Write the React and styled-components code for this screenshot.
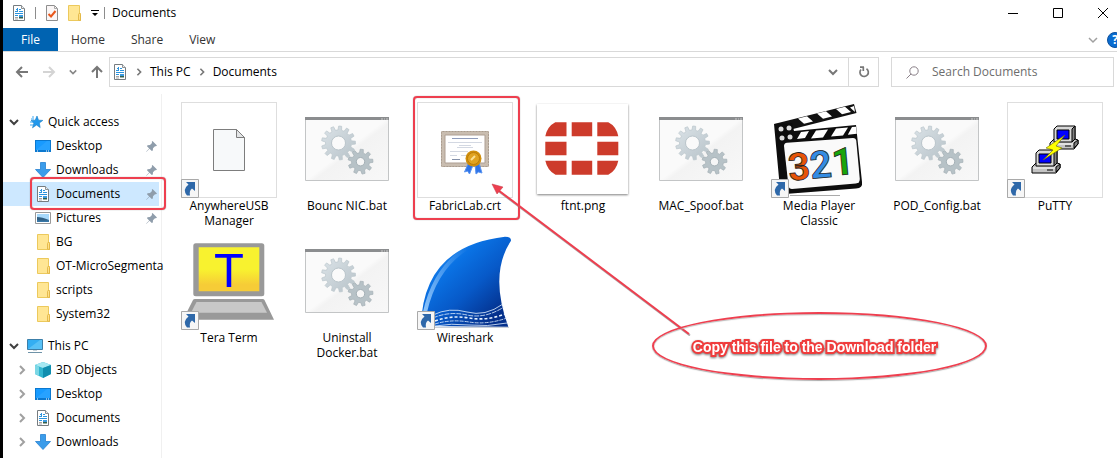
import React from "react";
import styled, { createGlobalStyle } from "styled-components";

const GlobalStyle = createGlobalStyle`
  *, *::before, *::after { box-sizing: border-box; }
  body {
    margin: 0;
    background: #fff;
    color: #000;
    font: 12px/16px "Open Sans", "Noto Sans", sans-serif;
  }
  button, input { font: inherit; color: inherit; }
  button { border: 0; padding: 0; background: none; cursor: pointer; }
  svg { display: block; flex: none; }
`;

const RED = "#ee3f4f";

const Window = styled.div`
  display: flex;
  flex-direction: column;
  min-height: 100vh;
  border-left: 3px solid #000;
  overflow: hidden;
`;

const TitleBar = styled.header`
  display: flex;
  align-items: center;
  height: 28px;
  padding-left: 10px;
  padding-bottom: 3px;
`;

const QuickTools = styled.div`
  display: flex;
  align-items: center;
  gap: 10px;
`;

const QuickMenu = styled.div`
  display: flex;
  align-items: center;
  gap: 5px;
`;

const Separator = styled.span`
  width: 1px;
  height: 12px;
  background: #8c8c8c;
`;

const Title = styled.h1`
  margin: 0 0 0 7px;
  flex: 1;
  font-size: 12px;
  font-weight: 400;
`;

const WindowButtons = styled.div`
  display: flex;
  gap: 17px;
`;

const WindowButton = styled.button`
  display: grid;
  place-items: center;
  width: 28px;
  height: 24px;
`;

const Ribbon = styled.nav`
  display: flex;
  align-items: stretch;
  height: 24px;
  border-bottom: 1px solid #d9d9d9;
`;

const Tab = styled.button`
  padding: 0 ${(p) => (p.$primary ? 18 : 13)}px;
  background: ${(p) => (p.$primary ? "#0063b1" : "transparent")};
  color: ${(p) => (p.$primary ? "#fff" : "#333")};
`;

const RibbonEnd = styled.div`
  display: flex;
  align-items: center;
  gap: 9px;
  margin-left: auto;
  margin-right: -6px;
`;

const AddressRow = styled.div`
  display: flex;
  align-items: center;
  gap: 12px;
  padding: 5px 3px 7px 12px;
`;

const NavButtons = styled.div`
  display: flex;
  align-items: center;
  gap: 13px;
  margin-right: -7px;
`;

const AddressBox = styled.div`
  display: flex;
  align-items: center;
  flex: 1;
  height: 30px;
  border: 1px solid #d9d9d9;
  padding-left: 2px;
`;

const Crumbs = styled.div`
  display: flex;
  align-items: center;
  flex: 1;
  gap: 7px;
`;

const AddressButton = styled.button`
  display: grid;
  place-items: center;
  align-self: stretch;
  width: 30px;
  border-left: ${(p) => (p.$divided ? "1px solid #d9d9d9" : "0")};
`;

const SearchBox = styled.label`
  display: flex;
  align-items: center;
  flex: 0 0 223px;
  gap: 13px;
  height: 30px;
  padding-left: 14px;
  border: 1px solid #d9d9d9;
`;

const SearchInput = styled.input`
  flex: 1;
  min-width: 0;
  border: 0;
  padding: 0;
  outline: 0;
  background: none;
  &::placeholder { color: #6d6d6d; opacity: 1; }
`;

const Body = styled.div`
  display: flex;
  flex: 1;
`;

const Sidebar = styled.nav`
  flex: 0 0 159px;
  min-width: 0;
  padding: 16px 2px 0 0;
  border-right: 1px solid #f0f0f0;
`;

const TreeGroup = styled.div`
  margin-bottom: 8px;
`;

const TreeRow = styled.button`
  position: relative;
  display: flex;
  align-items: center;
  gap: 5px;
  width: 100%;
  height: 24px;
  padding-left: ${(p) => (p.$nested ? 11 : 3)}px;
  text-align: left;
  background: ${(p) => (p.$selected ? "#cde8ff" : "transparent")};
`;

const Toggle = styled.span`
  display: grid;
  place-items: center;
  flex: 0 0 16px;
`;

const TreeLabel = styled.span`
  flex: 1;
  min-width: 0;
  white-space: nowrap;
`;

const PinSlot = styled.span`
  padding-right: 2px;
`;

const Marker = styled.span`
  position: absolute;
  inset: ${(p) => p.$inset};
  border: 2px solid ${RED};
  border-radius: 4px;
  box-shadow: 0 0 1px #777, inset 0 0 1px #999;
  pointer-events: none;
`;

const Files = styled.main`
  position: relative;
  display: grid;
  grid-template-columns: repeat(auto-fill, 118px);
  grid-auto-rows: 132px;
  align-content: start;
  flex: 1;
  padding: 8px 0 0 8px;
`;

const File = styled.button`
  position: relative;
  display: flex;
  flex-direction: column;
  align-items: center;
  line-height: 15px;
`;

const Thumb = styled.span`
  position: relative;
  width: 96px;
  height: 96px;
  border: 1px solid ${(p) => (p.$framed ? "#dedede" : "transparent")};
  > svg { margin: -1px; }
`;

const FileName = styled.span`
  width: 96px;
`;

const Arrow = styled.svg`
  position: absolute;
  left: 328px;
  top: 88px;
  pointer-events: none;
`;

const Callout = styled.div`
  position: absolute;
  left: 490px;
  top: 218px;
  display: flex;
  align-items: center;
  justify-content: center;
  width: 335px;
  height: 68px;
  padding: 2px 10px 0 0;
  border: 2px solid ${RED};
  border-radius: 50%;
  box-shadow: 0 1px 1px #aaa, inset 0 1px 1px #bbb;
  color: #fff;
  font: bold 14px/16px "Liberation Sans", Arial, sans-serif;
  white-space: nowrap;
`;

const CalloutText = styled.span`
  -webkit-text-stroke: 4px #f03c3c;
  paint-order: stroke fill;
  filter: drop-shadow(0 1px 1px #777);
`;

function Chevron({ dir = "down", color = "#444", size = 10, weight = 2 }) {
  const d = { down: "M1 3l4 4 4-4", right: "M3 1l4 4-4 4" }[dir];
  return (
    <svg width={size} height={size} viewBox="0 0 10 10" fill="none" stroke={color} strokeWidth={weight}>
      <path d={d} />
    </svg>
  );
}

function ArrowIcon({ dir, color }) {
  const turn = { left: 0, up: 90, right: 180 }[dir];
  return (
    <svg width="14" height="14" viewBox="0 0 14 14" fill="none" stroke={color} strokeWidth="2">
      <path d="M7 2L2 7l5 5M2 7h11" transform={`rotate(${turn} 7 7)`} />
    </svg>
  );
}

function DocIcon({ w = 16 }) {
  return (
    <svg width={w} height="16" viewBox={w === 16 ? "0 0 16 16" : "2 0 12 16"}>
      <path d="M2.5.5h8l3 3v12h-11z" fill="#fff" stroke="#767c80" />
      <path d="M10.500 .5v3h3" fill="#eee" stroke="#8b9195" />
      <path d="M4 6.500h3M5 4.500h1M6.500 3v4M8 4.500h2M8 6.500h4M4 8.500h8M4 10.500h3" stroke="#2b94de" fill="none" />
      <path d="M4 12.500h3M4 14h3" stroke="#a5a5a5" />
      <path d="M8 10h4v2H8z" fill="#3c9ae0" />
      <path d="M8 12h4v1.500H8z" fill="#34604c" />
    </svg>
  );
}

function FolderIcon({ w = 16 }) {
  return (
    <svg width={w} height="16" viewBox={w === 16 ? "0 0 16 16" : "2 0 13 16"}>
      <path d="M2.500 .5h11v8h1v7h-12z" fill="#ffe694" stroke="#ecc95c" />
      <path d="M12.500 15v-5.500l1-1.500 1 1.500v6z" fill="#ffe08a" stroke="#deb13c" strokeWidth=".8" />
    </svg>
  );
}

function CheckDocIcon() {
  return (
    <svg width="12" height="16" viewBox="0 0 12 16" fill="none">
      <path d="M.5.5h8l3 3v12H.5z" fill="#faf6f6" stroke="#8e8e8e" />
      <path d="M8.500 .5v3h3" stroke="#aaa" />
      <path d="M2.500 9l2.500 2.500L9.500 6" stroke="#e8571c" strokeWidth="2" />
    </svg>
  );
}

function DesktopIcon() {
  return (
    <svg width="16" height="16" viewBox="0 0 16 16">
      <path d="M0 2h16v12H0z" fill="#0b78cf" />
      <path d="M1 3h14v9H1z" fill="#189bff" />
      <path d="M1 12L12 3h3v9z" fill="#35a9ff" opacity=".5" />
      <path d="M2 13h1M11 13h1M13 13h1" stroke="#fff" />
    </svg>
  );
}

function DownloadIcon() {
  return (
    <svg width="16" height="16" viewBox="0 0 16 16">
      <path d="M5.500 .5h5v7h5L8 15.500.5 7.500h5z" fill="#3b9cea" stroke="#2682d2" strokeWidth=".8" />
    </svg>
  );
}

function PictureIcon() {
  return (
    <svg width="16" height="16" viewBox="0 0 16 16">
      <path d="M.5 2.500h15v11H.5z" fill="#fff" stroke="#999" />
      <path d="M2 4h12v8H2z" fill="#a7d8fa" />
      <path d="M2 7q5 0 12 3v2H2z" fill="#315f83" />
      <path d="M2 10q6 1 12 0v2H2z" fill="#3978a7" />
    </svg>
  );
}

function StarIcon() {
  return (
    <svg width="16" height="16" viewBox="0 0 16 16">
      <path d="M10 2l1.500 4.200 4.300.2-3.500 2.600.9 4.600L9.500 11 5.500 13.800l1.400-4.600L4 6.400l4.200-.2z" fill="#2198ec" stroke="#137ac4" strokeWidth=".6" />
      <path d="M4 5h3M3 8h3M3 11h3M5 3h2" stroke="#3aa7f2" />
    </svg>
  );
}

function PcIcon() {
  return (
    <svg width="16" height="16" viewBox="0 0 16 16">
      <path d="M.5 1.500h15v10H.5z" fill="#34aef2" stroke="#3c7fa9" />
      <path d="M1 11L13 2h2v9z" fill="#72cdf8" opacity=".6" />
      <path d="M1 14.500h14" stroke="#6f93a8" />
      <path d="M6 12h4v1H6z" fill="#c8d4dc" />
    </svg>
  );
}

function CubeIcon() {
  return (
    <svg width="16" height="16" viewBox="0 0 16 16">
      <path d="M0 3l8-3 8 3v9l-8 4-8-4z" fill="#31b5cf" />
      <path d="M0 3l8-3 8 3-8 3z" fill="#a6e8f2" />
      <path d="M8 6l8-3v9l-8 4z" fill="#118eaf" />
      <path d="M0 3l4 1.500v9.500L0 12z" fill="#7bd7e5" />
    </svg>
  );
}

function PinIcon() {
  return (
    <svg width="11" height="11" viewBox="0 0 11 11">
      <path d="M6.500 0L11 4.500l-1 .8-1-.1L7 7.200 6.800 9.500l-1 .5-2.300-2.300L.5 10.800l-.3-.3 3-3L1 5.200l.5-1L4 4l2-2-.2-1.200z" fill="#8f9dab" />
    </svg>
  );
}

function ShortcutBadge() {
  return (
    <g>
      <path d="M.5 77.500h17v18H.5z" fill="#f6f6f6" stroke="#a9a9a9" />
      <path d="M5 80h9v9l-3-2.500q-3 2-2 7H6q-5-6 1.500-11z" fill="#2e68a9" />
    </g>
  );
}

const gearPath = (cx, cy, teeth, outer, root) => {
  const step = (Math.PI * 2) / teeth;
  const at = (r, a) => `${(cx + r * Math.cos(a)).toFixed(2)} ${(cy + r * Math.sin(a)).toFixed(2)}`;
  return Array.from({ length: teeth }, (_, i) => {
    const a = i * step - Math.PI / 2 + 0.1;
    return `${i ? "L" : "M"}${at(root, a - step * 0.3)}L${at(outer, a - step * 0.18)}L${at(outer, a + step * 0.18)}L${at(root, a + step * 0.3)}`;
  }).join("") + "Z";
};

function BatchArt() {
  return (
    <>
      <defs>
        <linearGradient id="pane" x1="0" y1="0" x2="1" y2="1">
          <stop offset=".5" stopColor="#fafafa" />
          <stop offset=".55" stopColor="#f3f3f3" />
          <stop offset="1" stopColor="#f8f8f8" />
        </linearGradient>
        <linearGradient id="gear" x1="0" y1="0" x2="1" y2="1">
          <stop offset="0" stopColor="#dbe3e8" />
          <stop offset="1" stopColor="#b8c3c9" />
        </linearGradient>
      </defs>
      <path d="M6.500 15.500h83v63h-83z" fill="url(#pane)" stroke="#c3c5c6" />
      <path d="M6 15h84v3H6z" fill="#8b8d8f" />
      <path d="M82 17h2M85 17h1M87 17h2" stroke="#c9c9c9" />
      <path d={gearPath(39.500, 41, 13, 17, 13)} fill="url(#gear)" stroke="#bac5cb" strokeWidth=".7" />
      <circle cx="39.500" cy="41" r="7" fill="#fafafa" stroke="#bac5cb" />
      <path d={gearPath(61.500, 59.700, 9, 12.500, 9)} fill="#b7c2c7" stroke="#a3afb5" strokeWidth=".7" />
      <circle cx="61.500" cy="59.700" r="4.200" fill="#f6f6f6" stroke="#a3afb5" />
    </>
  );
}

function BlankDocArt() {
  return (
    <>
      <path d="M32.500 27.500h23l8 8v33h-31z" fill="#f7f9fa" stroke="#7d7d7d" />
      <path d="M55.500 27.500v8h8z" fill="#e3e5e6" stroke="#7d7d7d" />
      <ShortcutBadge />
    </>
  );
}

function CertificateArt() {
  return (
    <>
      <rect x="24" y="29" width="48" height="36" rx="1" fill="#c9bdb0" />
      <rect x="24.500" y="29.500" width="47" height="35" rx="1" fill="none" stroke="#a99c8f" strokeDasharray="2 1" />
      <path d="M28 33h40v28H28z" fill="#fff" stroke="#ae9f93" />
      <path d="M35 36.500h26" stroke="#8f9cbb" />
      <path d="M31 40.500h34M42 43.500h12M40 45.500h16M33 49.500h18M33 53.500h7M44 53.500h6" stroke="#d3d8e2" />
      <path d="M35 57.500h8" stroke="#8390a9" />
      <path d="M51 62l-3.500 8 3-1 2 3 4-10zM58 62l1 10 2.500-2 3.500 1-3-10z" fill="#2f74e8" stroke="#5a94f0" />
      <circle cx="56.500" cy="56.500" r="8" fill="#d08f0d" />
      <circle cx="56.500" cy="56.500" r="6" fill="#e0a321" stroke="#bc7c08" />
      <path d="M54 58l4-4" stroke="#fbe093" strokeWidth="2" fill="none" />
    </>
  );
}

function FtntArt() {
  return (
    <>
      <defs>
        <filter id="paper" x="-10%" y="-10%" width="120%" height="120%">
          <feDropShadow dx="0" dy="1" stdDeviation="1" floodOpacity=".5" />
        </filter>
      </defs>
      <path d="M2 2h91v90H2z" fill="#fff" filter="url(#paper)" />
      <g fill="#cd3b2b">
        <path d="M31.500 20.300v14H10.300q2-10 10-14zM36.700 20.300h20.500v14H36.700zM62.300 20.300h11q8 4 10 14h-21z" />
        <path d="M10.300 39.700h21.200v13.500H10.300zM62.300 39.700h21v13.500h-21z" />
        <path d="M10.300 58.700h21.200v14h-11q-8-4-10.200-14zM36.700 58.700h20.500v14H36.700zM62.300 58.700h21q-2 10-10 14h-11z" />
      </g>
    </>
  );
}

function ClapperArt() {
  return (
    <>
      <path d="M3 22L83 2l2.500 9L22 27z" fill="#111" />
      <path d="M3 22l18-1 2 8 62-6 6 57q1 6-6 6.500L14 92q-4 0-5-5z" fill="#0d0d0d" />
      <path d="M27 16.500l9-2.200 6 5.200-9 2.200zM46 11.500l9-2.200 6 5.200-9 2.200zM65 7l9-2.200 6 5.200-9 2.200zM79 5.500l4-1.500 1 6z" fill="#fff" />
      <path d="M30 30l8-1-4 7-8 1zM45 28.500l12-1-5 8-12 1zM65 26.500l12-1-5 8-12 1zM81 25l4-.3.8 7-9 1z" fill="#fff" />
      <path d="M13 44q0-3 3-3.300L82 36q3 0 3.300 3l3.500 38q0 4-4 4.500L21 87q-3 0-3.500-3z" fill="#fafafa" />
      <g fill="#ddd">
        <circle cx="10" cy="27" r="2.500" />
        <circle cx="18" cy="26" r="2.500" />
        <circle cx="11" cy="36" r="2.500" />
        <circle cx="19" cy="35" r="2.500" />
      </g>
      <g fontFamily="Roboto, sans-serif" fontWeight="700" fontSize="38" stroke="#222" strokeWidth=".8" transform="rotate(-5 48 64)">
        <text x="17" y="76" fill="#e75408">3</text>
        <text x="39" y="76" fill="#348ce3">2</text>
        <text x="61" y="75" fill="#18a60b">1</text>
      </g>
      <path d="M19 93.500h50" stroke="#aaa" />
      <ShortcutBadge />
    </>
  );
}

function Computer({ x, y }) {
  return (
    <g transform={`translate(${x} ${y})`} stroke="#000" strokeLinejoin="round">
      <path d="M1 18l4-4h21l3 1v4l-4 5H1z" fill="#c4c4c4" />
      <path d="M25 23v-5l4-3v4z" fill="#808080" />
      <path d="M5 4l3-3h18v13l-3 3H5z" fill="#d8d8d8" />
      <path d="M23 4l3-3v13l-3 3z" fill="#808080" />
      <path d="M8 5h12v9H8z" fill="#00f" />
      <path d="M2 19h22" stroke="#fff" />
      <path d="M16 21h6" />
    </g>
  );
}

function PuttyArt() {
  return (
    <>
      <Computer x="42" y="23" />
      <Computer x="24" y="47" />
      <path d="M58 33L39 46l7 2-10 10 19-12-6-2z" fill="#ff0" stroke="#6b6b00" strokeWidth=".6" />
      <ShortcutBadge />
    </>
  );
}

function TeraTermArt() {
  return (
    <>
      <defs>
        <linearGradient id="screen" x1="0" y1="0" x2="0" y2="1">
          <stop offset=".5" stopColor="#f8f22f" />
          <stop offset=".85" stopColor="#f6cc37" />
        </linearGradient>
      </defs>
      <rect x="12.300" y="9.300" width="71" height="53" rx="2.500" fill="#999" />
      <path d="M17.700 13.300h60.600v44H17.700z" fill="url(#screen)" />
      <text x="48" y="53" textAnchor="middle" fontFamily="Liberation Sans, sans-serif" fontSize="49" fill="#00f">T</text>
      <path d="M14 65h67.500q1.500 0 2 1L93 85.700H2L12 66q.5-1 2-1z" fill="#999" />
      <path d="M15.500 68h65L86 78.700H10z" fill="#c8c8c8" />
      <ShortcutBadge />
    </>
  );
}

function WiresharkArt() {
  return (
    <>
      <defs>
        <linearGradient id="fin" x1="0" y1="0" x2=".9" y2="1">
          <stop offset="0" stopColor="#3b9bf5" />
          <stop offset=".35" stopColor="#0a72e4" />
          <stop offset=".6" stopColor="#0759c8" />
          <stop offset=".9" stopColor="#04308c" />
        </linearGradient>
        <linearGradient id="shine" x1="0" y1="1" x2="1" y2="0">
          <stop offset="0" stopColor="#8cc4fb" />
          <stop offset="1" stopColor="#8cc4fb" stopOpacity="0" />
        </linearGradient>
      </defs>
      <path d="M4 92Q6 12 88 2.700q6 0 6 4Q72 40 91.300 92.700z" fill="url(#fin)" />
      <path d="M8 78Q18 34 50 14" fill="none" stroke="url(#shine)" strokeWidth="4" />
      <g fill="none" stroke="#e4f1ff" strokeWidth=".8">
        <path d="M16 81q16-8 34-3t36-8" />
        <path d="M16 84q16-7 34-3t37-8" strokeDasharray="5 1" />
        <path d="M18 87q16-6 34-3t36-4" strokeWidth="1.600" strokeDasharray="3 2" />
        <path d="M18 90q16-5 34-2t38-4" strokeDasharray="4 1" />
        <path d="M18 92q16-3 34-1t38-2" />
      </g>
      <path d="M18 93.500h74" stroke="#c9d0d8" />
      <ShortcutBadge />
    </>
  );
}

const quickAccess = [
  { label: "Desktop", Icon: DesktopIcon, pinned: true },
  { label: "Downloads", Icon: DownloadIcon, pinned: true },
  { label: "Documents", Icon: DocIcon, pinned: true, selected: true },
  { label: "Pictures", Icon: PictureIcon, pinned: true },
  { label: "BG", Icon: FolderIcon },
  { label: "OT-MicroSegmenta", Icon: FolderIcon },
  { label: "scripts", Icon: FolderIcon },
  { label: "System32", Icon: FolderIcon },
];

const thisPc = [
  { label: "3D Objects", Icon: CubeIcon, toggle: "right" },
  { label: "Desktop", Icon: DesktopIcon, toggle: "right" },
  { label: "Documents", Icon: DocIcon, toggle: "right" },
  { label: "Downloads", Icon: DownloadIcon, toggle: "right" },
];

const files = [
  { name: "AnywhereUSB Manager", Art: BlankDocArt, framed: true },
  { name: "Bounc NIC.bat", Art: BatchArt },
  { name: "FabricLab.crt", Art: CertificateArt, framed: true, marked: true },
  { name: "ftnt.png", Art: FtntArt },
  { name: "MAC_Spoof.bat", Art: BatchArt },
  { name: "Media Player Classic", Art: ClapperArt },
  { name: "POD_Config.bat", Art: BatchArt },
  { name: "PuTTY", Art: PuttyArt, framed: true },
  { name: "Tera Term", Art: TeraTermArt },
  { name: "Uninstall Docker.bat", Art: BatchArt },
  { name: "Wireshark", Art: WiresharkArt },
];

function TreeItem({ label, Icon, pinned, selected, toggle, nested = true }) {
  return (
    <TreeRow $nested={nested} $selected={selected}>
      <Toggle>
        {toggle && <Chevron dir={toggle} color={toggle === "down" ? "#404040" : "#a0a0a0"} />}
      </Toggle>
      <Icon />
      <TreeLabel>{label}</TreeLabel>
      {pinned && <PinSlot><PinIcon /></PinSlot>}
      {selected && <Marker $inset="-5px -7px -4px 27px" />}
    </TreeRow>
  );
}

export default function App() {
  return (
    <Window>
      <GlobalStyle />
      <TitleBar>
        <QuickTools>
          <DocIcon w={12} />
          <Separator />
          <CheckDocIcon />
          <FolderIcon w={13} />
          <QuickMenu>
            <button aria-label="Customize toolbar">
              <svg width="8" height="8" viewBox="0 0 8 8"><path d="M0 1h8v1H0zM1 4h6L4 7z" /></svg>
            </button>
            <Separator />
          </QuickMenu>
        </QuickTools>
        <Title>Documents</Title>
        <WindowButtons>
          <WindowButton aria-label="Minimize">
            <svg width="10" height="10"><path d="M0 5h10v1H0z" /></svg>
          </WindowButton>
          <WindowButton aria-label="Maximize">
            <svg width="10" height="10"><path d="M.5.5h9v9h-9z" fill="none" stroke="#000" /></svg>
          </WindowButton>
          <WindowButton aria-label="Close">
            <svg width="10" height="10"><path d="M0 0l10 10M10 0L0 10" stroke="#000" /></svg>
          </WindowButton>
        </WindowButtons>
      </TitleBar>
      <Ribbon>
        <Tab $primary>File</Tab>
        <Tab>Home</Tab>
        <Tab>Share</Tab>
        <Tab>View</Tab>
        <RibbonEnd>
          <Chevron color="#a0a0a0" weight={1.5} />
          <svg width="16" height="16" viewBox="0 0 16 16">
            <circle cx="8" cy="8" r="7.500" fill="#0a6cd0" stroke="#0b4f9c" />
            <text x="8" y="12" textAnchor="middle" fontSize="12" fontWeight="700" fill="#fff">?</text>
          </svg>
        </RibbonEnd>
      </Ribbon>
      <AddressRow>
        <NavButtons>
          <button aria-label="Back"><ArrowIcon dir="left" color="#777" /></button>
          <button aria-label="Forward"><ArrowIcon dir="right" color="#d4d4d4" /></button>
          <button aria-label="Recent"><Chevron color="#888" size={8} /></button>
          <button aria-label="Up"><ArrowIcon dir="up" color="#777" /></button>
        </NavButtons>
        <AddressBox>
          <Crumbs>
            <DocIcon />
            <Chevron dir="right" color="#777" size={8} />
            <span>This PC</span>
            <Chevron dir="right" color="#777" size={8} />
            <span>Documents</span>
          </Crumbs>
          <AddressButton aria-label="Previous locations"><Chevron color="#777" /></AddressButton>
          <AddressButton $divided aria-label="Refresh">
            <svg width="12" height="12" viewBox="0 0 12 12" fill="none" stroke="#777" strokeWidth="1.700">
              <path d="M8.500 2.800A4.200 4.200 0 1 1 3 3.500M2 1.200h4M5.300 1v4" />
            </svg>
          </AddressButton>
        </AddressBox>
        <SearchBox>
          <svg width="13" height="13" viewBox="0 0 13 13" fill="none" stroke="#8a8088">
            <circle cx="8" cy="5" r="4.200" />
            <path d="M5 8l-4.500 4.500" />
          </svg>
          <SearchInput placeholder="Search Documents" aria-label="Search Documents" />
        </SearchBox>
      </AddressRow>
      <Body>
        <Sidebar>
          <TreeGroup>
            <TreeItem label="Quick access" Icon={StarIcon} toggle="down" nested={false} />
            {quickAccess.map((i) => <TreeItem key={i.label} {...i} />)}
          </TreeGroup>
          <TreeGroup>
            <TreeItem label="This PC" Icon={PcIcon} toggle="down" nested={false} />
            {thisPc.map((i) => <TreeItem key={i.label} {...i} />)}
          </TreeGroup>
        </Sidebar>
        <Files>
          {files.map(({ name, Art, framed, marked }) => (
            <File key={name}>
              <Thumb $framed={framed}>
                <svg width="96" height="96" viewBox="0 0 96 96"><Art /></svg>
              </Thumb>
              <FileName>{name}</FileName>
              {marked && <Marker $inset="-6px 4px 14px 7px" />}
            </File>
          ))}
          <Arrow width="204" height="154" viewBox="0 0 204 154">
            <path d="M9 9.500l191 144" stroke="#777" strokeWidth="2" opacity=".6" />
            <path d="M8 8l191 144" stroke={RED} strokeWidth="2" />
            <path d="M2 2l11 3-6 7z" fill={RED} stroke="#c23742" strokeWidth=".5" />
          </Arrow>
          <Callout><CalloutText>Copy this file to the Download folder</CalloutText></Callout>
        </Files>
      </Body>
    </Window>
  );
}
